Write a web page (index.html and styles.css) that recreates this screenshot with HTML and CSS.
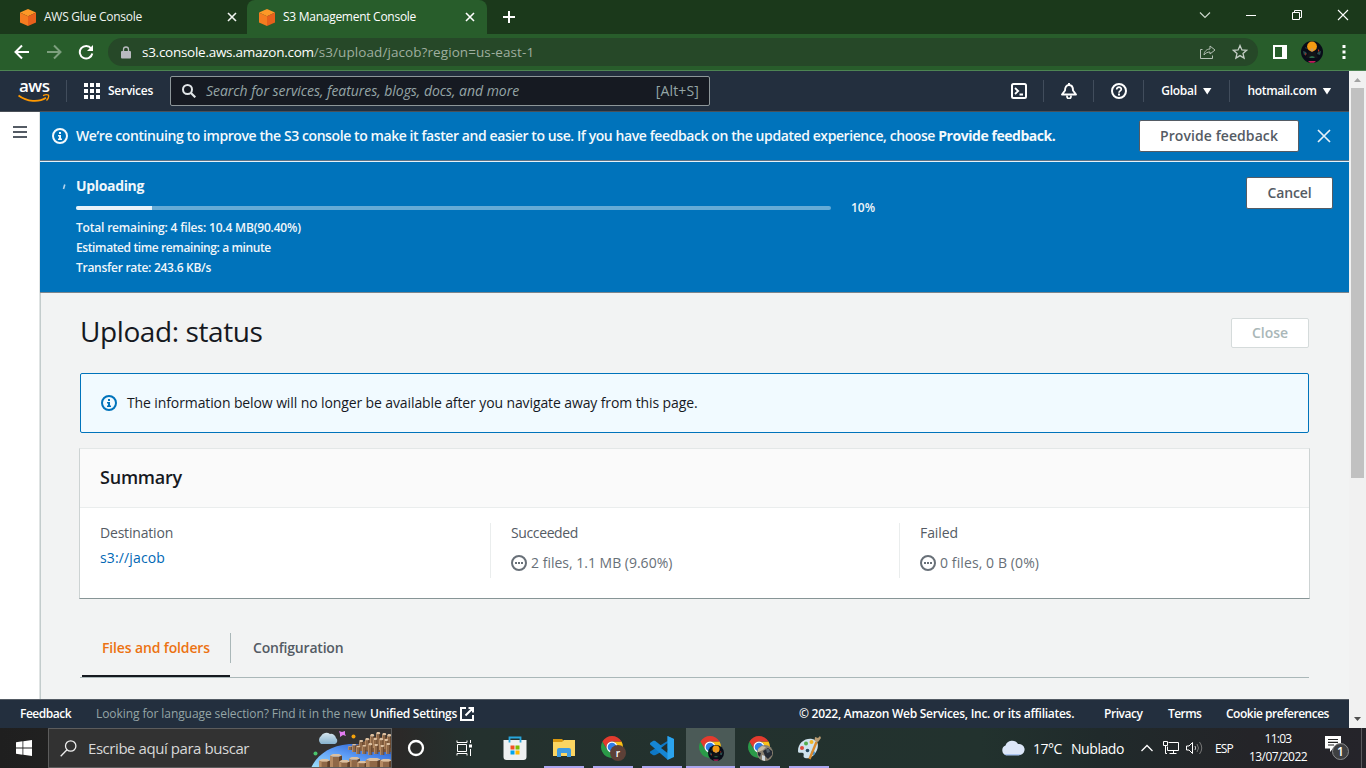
FILE: index.html
```html
<!DOCTYPE html>
<html lang="en">
<head>
<meta charset="utf-8">
<title>S3 Management Console</title>
<link rel="stylesheet" href="styles.css">
</head>
<body>
<svg class="defs" aria-hidden="true">
  <symbol id="cube" viewBox="0 0 16 17"><path fill="#fd9827" d="M8 0l8 3.600-8 3.600L0 3.600z"/><path fill="#f57c20" d="M0 3.600l8 3.600V17l-8-3.600z"/><path fill="#e8601c" d="M16 3.600L8 7.200V17l8-3.600z"/></symbol>
  <symbol id="x" viewBox="0 0 10 10"><path d="M1 1l8 8M9 1L1 9" fill="none" stroke="currentColor" stroke-width="1.600"/></symbol>
  <symbol id="info" viewBox="0 0 16 16"><circle cx="8" cy="8" r="7" fill="none" stroke="currentColor" stroke-width="2"/><path fill="currentColor" d="M7 4h2v2H7zM6 7h3v3.500h1V12H6v-1.500h1v-2H6z"/></symbol>
  <symbol id="pending" viewBox="0 0 16 16"><circle cx="8" cy="8" r="7" fill="none" stroke="currentColor" stroke-width="2"/><path fill="currentColor" d="M4 7h2v2H4zM7 7h2v2H7zM10 7h2v2h-2z"/></symbol>
  <symbol id="swirl" viewBox="0 0 24 24"><path d="M22.390 6A12 12 0 0 0 1.610 6L6.800 15A6 6 0 0 1 12 6z"/></symbol>
  <symbol id="chrome" viewBox="0 0 24 24"><use href="#swirl" width="24" height="24" fill="#fbc116" transform="rotate(120 12 12)"/><use href="#swirl" width="24" height="24" fill="#2a9a48" transform="rotate(240 12 12)"/><use href="#swirl" width="24" height="24" fill="#e33b2e"/><circle cx="12" cy="12" r="6" fill="#fff"/><circle cx="12" cy="12" r="4.700" fill="#2f7de9"/></symbol>
  <symbol id="face" viewBox="0 0 22 22"><circle cx="11" cy="11" r="11" fill="#080c18"/><circle cx="11" cy="5.500" r="4.900" fill="#f39a12"/><path fill="#2b4d4d" d="M2 10l3 1 1 2-3 1zM20 10l-3 1-1 2 3 1zM4 6l2 1-1 1z"/><path fill="#c99a62" d="M9.800 7.500h2.400V10.500H9.800z"/><path fill="#121418" d="M7.500 11h7l2.500 6H5z"/><path fill="#b3321c" d="M4 12l1.500 1-1 2zM17 8l1.500 1.500L17 11z"/><path fill="#2b6b4a" d="M8 16l3-1 3 1-1 1H9z"/><path fill="#c01e5c" d="M7 20h8l-2 1.800H9z"/></symbol>
  <symbol id="pillar" viewBox="0 0 12 20" preserveAspectRatio="none"><path fill="#dcc0a0" d="M3 0h6l3 2-3 2H3L0 2z"/><path fill="#b58a62" d="M0 2l3 2v16H0z"/><path fill="#8f6847" d="M3 4h6v16H3z"/><path fill="#5f4029" d="M12 2L9 4v16h3z"/></symbol>
</svg>

<header class="tabs">
  <div class="tab"><svg class="cube"><use href="#cube"/></svg><span class="tab-name">AWS Glue Console</span><svg class="tab-x"><use href="#x"/></svg></div>
  <div class="tab active"><svg class="cube"><use href="#cube"/></svg><span class="tab-name second">S3 Management Console</span><svg class="tab-x"><use href="#x"/></svg></div>
  <svg class="plus" viewBox="0 0 12 12"><path d="M6 0v12M0 6h12" stroke="#fff" stroke-width="2"/></svg>
  <div class="window-buttons">
    <svg viewBox="0 0 12 12"><path d="M1 3.500l5 5 5-5" fill="none" stroke="#ccd6cc" stroke-width="1.200"/></svg>
    <svg viewBox="0 0 12 12"><path d="M1 6.500h10" stroke="#fff"/></svg>
    <svg viewBox="0 0 12 12"><path d="M1.500 3.500h7v7h-7zM3.500 3.500v-2h7v7h-2" fill="none" stroke="#fff"/></svg>
    <svg viewBox="0 0 12 12"><path d="M1 1l10 10M11 1L1 11" stroke="#fff" stroke-width="1.100"/></svg>
  </div>
</header>

<div class="toolbar">
  <svg class="nav-icon" viewBox="0 0 16 16"><path d="M15 8H2M8 1.500L1.500 8 8 14.500" fill="none" stroke="#fff" stroke-width="2"/></svg>
  <svg class="nav-icon" viewBox="0 0 16 16"><path d="M1 8h13M8 1.500L14.500 8 8 14.500" fill="none" stroke="#7d9f7e" stroke-width="2"/></svg>
  <svg class="nav-icon" viewBox="0 0 16 16"><path d="M13.200 4.500A6.300 6.300 0 1 0 14.300 9.500" fill="none" stroke="#fff" stroke-width="2"/><path d="M15 1v6H9z" fill="#fff"/></svg>
  <div class="omnibox">
    <svg class="lock" viewBox="0 0 10 13"><path fill="#b9bac0" d="M1 5h8a1 1 0 0 1 1 1v5.500a1 1 0 0 1-1 1H1a1 1 0 0 1-1-1V6a1 1 0 0 1 1-1z"/><path d="M2.500 6V3.500a2.500 2.500 0 0 1 5 0V6" fill="none" stroke="#b9bac0" stroke-width="1.300"/></svg>
    <span class="domain">s3.console.aws.amazon.com</span><span class="path">/s3/upload/jacob?region=us-east-1</span>
    <svg class="share" viewBox="0 0 16 14"><path d="M2.500 4.500h-2v9h12v-3" fill="none" stroke="#b4c0b5"/><path d="M10 1l5 4-5 4V7C7.500 7 5.500 8 4 10c.3-3.500 2.500-6 6-6z" fill="none" stroke="#b4c0b5"/></svg>
    <svg class="star" viewBox="0 0 16 16"><path d="M8 1.500l1.900 4.400 4.700.4-3.600 3.100 1.100 4.700L8 11.600l-4.100 2.500L5 9.400 1.400 6.300l4.700-.4z" fill="none" stroke="#c4cdc5" stroke-width="1.300"/></svg>
  </div>
  <svg class="panel" viewBox="0 0 14 14"><path fill="#fff" fill-rule="evenodd" d="M0 0h14v14H0zM2 2v10h7V2z"/></svg>
  <svg class="avatar"><use href="#face"/></svg>
  <svg class="dots" viewBox="0 0 4 14"><path fill="#fff" d="M.5 0h3v3h-3zM.5 5.500h3v3h-3zM.5 11h3v3h-3z"/></svg>
</div>

<div class="page">
  <div class="view">
    <nav class="aws-nav">
      <div class="aws-logo"><span>aws</span><svg viewBox="0 0 32 9"><path d="M.5 1.500C9 8 21 8.500 28 3.800" fill="none" stroke="#f90" stroke-width="1.800"/><path d="M25 1.600c2.500-1 4.500-1 5.500-.5.500 1.500-.3 3.700-2 5.400" fill="none" stroke="#f90" stroke-width="1.300"/></svg></div>
      <i class="sep first"></i>
      <svg class="grid" viewBox="0 0 16 16"><path fill="#fff" d="M0 0h4v4H0zM6 0h4v4H6zM12 0h4v4h-4zM0 6h4v4H0zM6 6h4v4H6zM12 6h4v4h-4zM0 12h4v4H0zM6 12h4v4H6zM12 12h4v4h-4z"/></svg>
      <span class="services">Services</span>
      <div class="search"><svg viewBox="0 0 14 14"><circle cx="5.500" cy="5.500" r="4.500" fill="none" stroke="#e2e6e8" stroke-width="2"/><path d="M9 9l4.300 4.300" stroke="#e2e6e8" stroke-width="2.200"/></svg><span class="placeholder">Search for services, features, blogs, docs, and more</span><span class="key">[Alt+S]</span></div>
      <div class="nav-tools">
        <div class="tool"><svg viewBox="0 0 16 16"><rect x="1" y="1" width="14" height="14" rx="1.500" fill="none" stroke="#fff" stroke-width="2"/><path d="M4 5l3.200 3L4 11M8.500 11.500H12" fill="none" stroke="#fff" stroke-width="1.800"/></svg></div>
        <div class="tool"><svg viewBox="0 0 16 16"><path d="M8 0v2M1 11.500h14l-3-4C12 4 10.500 2 8 2S4 4 4 7.500z" fill="none" stroke="#fff" stroke-width="1.900" stroke-linejoin="round"/><path d="M6 12.500v1a2 2 0 0 0 4 0v-1" fill="none" stroke="#fff" stroke-width="1.700"/></svg></div>
        <div class="tool"><svg viewBox="0 0 16 16"><circle cx="8" cy="8" r="7" fill="none" stroke="#fff" stroke-width="2"/><path d="M5.700 6.400C5.700 3.400 10.400 3.600 10.300 6.300 10.200 8 8 7.800 8 9.800" fill="none" stroke="#fff" stroke-width="1.700"/><path fill="#fff" d="M7 10.600h2v1.900H7z"/></svg></div>
        <div class="tool global"><span>Global</span><b class="caret"></b></div>
        <div class="tool account"><span>hotmail.com</span><b class="caret"></b></div>
      </div>
    </nav>
    <div class="body">
      <aside><svg viewBox="0 0 14 12"><path fill="#545b64" d="M0 0h14v2H0zM0 5h14v2H0zM0 10h14v2H0z"/></svg></aside>
      <main>
        <section class="flash">
          <svg class="info"><use href="#info"/></svg>
          <p class="flash-text">We’re continuing to improve the S3 console to make it faster and easier to use. If you have feedback on the updated experience, choose <b>Provide feedback.</b></p>
          <button class="btn feedback-btn">Provide feedback</button>
          <svg class="dismiss" viewBox="0 0 14 14"><path d="M1 1l12 12M13 1L1 13" stroke="#e4f0f8" stroke-width="1.700"/></svg>
        </section>
        <section class="upload">
          <svg class="spinner" viewBox="0 0 4 6"><path d="M2.800.5L1.500 5" stroke="#b3d4ec" stroke-width="1.600"/></svg>
          <div class="upload-info">
            <h3>Uploading</h3>
            <div class="progress"><div class="track"><div class="fill" style="width:10%"></div></div><span>10%</span></div>
            <p class="l1">Total remaining: 4 files: 10.4 MB(90.40%)</p>
            <p class="l2">Estimated time remaining: a minute</p>
            <p class="l3">Transfer rate: 243.6 KB/s</p>
          </div>
          <button class="btn cancel">Cancel</button>
        </section>
        <div class="content">
          <div class="title"><h1>Upload: status</h1><button class="btn close">Close</button></div>
          <div class="notice"><svg class="info"><use href="#info"/></svg><span>The information below will no longer be available after you navigate away from this page.</span></div>
          <section class="summary">
            <h2>Summary</h2>
            <div class="cols">
              <div class="col"><label class="dest">Destination</label><a>s3://jacob</a></div>
              <div class="col"><label class="succ">Succeeded</label><div class="status"><svg><use href="#pending"/></svg><span>2 files, 1.1 MB (9.60%)</span></div></div>
              <div class="col"><label>Failed</label><div class="status"><svg><use href="#pending"/></svg><span class="none">0 files, 0 B (0%)</span></div></div>
            </div>
          </section>
          <div class="page-tabs"><div class="page-tab on">Files and folders</div><i></i><div class="page-tab">Configuration</div></div>
        </div>
      </main>
    </div>
    <footer>
      <span class="f-feedback">Feedback</span>
      <span class="f-lang">Looking for language selection? Find it in the new</span>
      <span class="f-unified">Unified Settings</span>
      <svg viewBox="0 0 14 14"><path d="M6 1H1v12h12V8M8.500 1H13v4.500M13 1L5.500 8.500" fill="none" stroke="#fff" stroke-width="2"/></svg>
      <span class="f-copy">© 2022, Amazon Web Services, Inc. or its affiliates.</span>
      <span class="f-privacy">Privacy</span>
      <span class="f-terms">Terms</span>
      <span class="f-cookie">Cookie preferences</span>
    </footer>
  </div>
  <div class="scrollbar">
    <svg viewBox="0 0 17 17"><path fill="#a3a3a3" d="M5 11l3.500-4 3.500 4z"/></svg>
    <div class="thumb"></div>
    <svg class="down" viewBox="0 0 17 17"><path fill="#505050" d="M5 6l3.500 4L12 6z"/></svg>
  </div>
</div>

<div class="taskbar">
  <div class="start"><svg viewBox="0 0 16 16"><path fill="#fff" d="M0 2.300l6.500-1v6.300H0zM7.300 1.200L16 0v7.600H7.300zM0 8.400h6.500v6.300L0 13.800zM7.300 8.400H16V16l-8.700-1.200z"/></svg></div>
  <div class="task-search">
    <svg class="mag" viewBox="0 0 17 17"><circle cx="10.700" cy="6" r="5.200" fill="none" stroke="#eee" stroke-width="1.300"/><path d="M7 9.800L.7 16.200" stroke="#eee" stroke-width="1.300"/></svg>
    <span>Escribe aquí para buscar</span>
    <svg class="art" viewBox="0 0 82 38">
      <defs><linearGradient id="sea" x1="0" y1="1" x2="1" y2="0"><stop offset="0" stop-color="#9fe3fb"/><stop offset=".5" stop-color="#5b9af5"/><stop offset="1" stop-color="#1c4fc0"/></linearGradient><linearGradient id="fog" x2="0" y2="1"><stop offset="0" stop-color="#d6e6ee"/><stop offset="1" stop-color="#86b2ce"/></linearGradient></defs>
      <path fill="url(#sea)" d="M2 39C8 26 20 17 40 15h42v24z"/>
      <path fill="url(#fog)" d="M12 15a5 5 0 0 1 0-8 6 6 0 0 1 9-2 5 5 0 0 1 6 4 3.500 3.500 0 0 1-1 6z"/>
      <path fill="#e27cf2" d="M30 2l3 1 3-1v3l1 2-3-1-3 2v-3z"/><circle cx="44.500" cy="7.500" r="2" fill="#f6a30b"/><circle cx="6.500" cy="24.500" r="2" fill="#49c46c"/>
      <path fill="#805b3f" d="M42 19l12-6 10-5 18 1v14H60z"/>
      <use href="#pillar" x="67" y="3" width="4.500" height="12"/><use href="#pillar" x="61" y="5" width="4.500" height="14"/><use href="#pillar" x="73" y="4" width="4.500" height="12"/><use href="#pillar" x="78" y="5" width="4.500" height="14"/><use href="#pillar" x="56" y="9" width="4.500" height="12"/><use href="#pillar" x="50" y="11" width="4.500" height="11"/>
      <use href="#pillar" x="64" y="9" width="4.500" height="10"/><use href="#pillar" x="70" y="9" width="4.500" height="12"/><use href="#pillar" x="75" y="10" width="4.500" height="10"/>
      <use href="#pillar" x="39" y="17" width="4.500" height="4"/><use href="#pillar" x="43" y="15" width="4.500" height="8"/><use href="#pillar" x="47" y="17" width="4.500" height="8"/><use href="#pillar" x="53" y="16" width="4.500" height="9"/><use href="#pillar" x="59" y="14" width="4.500" height="12"/><use href="#pillar" x="65" y="15" width="4.500" height="10"/><use href="#pillar" x="71" y="16" width="4.500" height="10"/><use href="#pillar" x="77" y="14" width="4.500" height="11"/>
      <path fill="#a17449" d="M10 32h72v7H10z"/>
      <use href="#pillar" x="21" y="25" width="12" height="14"/><use href="#pillar" x="10" y="30" width="11" height="14"/><use href="#pillar" x="40" y="28" width="11" height="14"/><use href="#pillar" x="30" y="31" width="11" height="14"/><use href="#pillar" x="48" y="32" width="10" height="12"/><use href="#pillar" x="57" y="29" width="15" height="15"/><use href="#pillar" x="71" y="30" width="12" height="14"/>
    </svg>
  </div>
  <div class="slot half"><svg class="i18" viewBox="0 0 18 18"><circle cx="9" cy="9" r="7" fill="none" stroke="#fff" stroke-width="2.300"/></svg></div>
  <div class="slot half"><svg class="i16" viewBox="0 0 16 16"><path d="M1 .5v2h10v-2M1.500 4.500h9v7h-9zM1 15.500v-2h10v2M14.500 0v3M14.500 9v7" fill="none" stroke="#fff"/><path fill="#fff" d="M13 4.500h3v3h-3z"/></svg></div>
  <div class="slot store"><svg class="i24" viewBox="0 0 24 24"><path fill="#eef0f1" d="M.5 4h23v17a3 3 0 0 1-3 3h-17a3 3 0 0 1-3-3z"/><path d="M6.500 6.500V1.500h11v5" fill="none" stroke="#27a5dc" stroke-width="1.800"/><path fill="#f25022" d="M7.500 9.500h4v4h-4z"/><path fill="#7fba00" d="M12.500 9.500h4v4h-4z"/><path fill="#00a4ef" d="M7.500 14.500h4v4h-4z"/><path fill="#ffb900" d="M12.500 14.500h4v4h-4z"/></svg></div>
  <div class="slot open"><svg class="i22" viewBox="0 0 22 20"><path fill="#d9980f" d="M0 1h9l2 2v4H0z"/><path fill="#fbd561" d="M0 4h9l2-2h11v16H0z"/><path fill="#3f9be0" d="M4 19v-7a2 2 0 0 1 2-2h10a2 2 0 0 1 2 2v7h-4v-4H8v4z"/></svg></div>
  <div class="slot open"><svg class="i26" viewBox="0 0 26 26"><use href="#chrome" x="1" y="1" width="22" height="22"/><circle cx="18" cy="18" r="8" fill="#5d4037"/><text x="18" y="21.500" class="badge-letter">r</text></svg></div>
  <div class="slot open"><svg class="i24" viewBox="0 0 24 24"><path fill="#0e78c6" d="M17.500 0L24 3v6L5 19.200l-1.700.1L0 17l.1-1.500L17.500 5z"/><path fill="#1686d4" d="M0 7l3.300-2.300L5 4.800 18 15v9L.1 8.500z"/><path fill="#222f2d" d="M17.500 7v10L11 12z"/><path fill="#2ba4ee" d="M17.500 0L24 3v18l-6.500 3z"/></svg></div>
  <div class="slot open current"><svg class="i26" viewBox="0 0 26 26"><use href="#chrome" x="1" y="1" width="22" height="22"/><use href="#face" x="10" y="10" width="16" height="16"/></svg></div>
  <div class="slot open"><svg class="i26" viewBox="0 0 26 26"><use href="#chrome" x="1" y="1" width="22" height="22"/><circle cx="18" cy="18" r="8" fill="#8a8171"/><path fill="#c6baa3" d="M11 14l4-3 4 1-3 3-5 2z"/><path fill="#242b35" d="M16 16l5-3 4 3 0 4-4 4-3-3zM11 17l3 1-1 4-2-2z"/><path fill="#54616b" d="M19 14l3 0 1 3-3 1z"/><path fill="#ced7dd" d="M15 20l3 1 0 5-3-1z"/></svg></div>
  <div class="slot open"><svg class="i26" viewBox="0 0 26 26"><path fill="#cfe3ee" d="M2 16C2 8 9 3 16 4c6 1 7 6 5 11-3 7-8 9-12 8-3-1 0-4-2-5-2-1-5 1-5-2z"/><circle cx="6" cy="13" r="2" fill="#dd4a3c"/><circle cx="10" cy="8.500" r="2" fill="#53ad4d"/><circle cx="15.500" cy="7" r="2" fill="#f0b428"/><circle cx="11.500" cy="15.500" r="1.800" fill="#25475c"/><circle cx="17" cy="18" r="2" fill="#3a8ed1"/><path d="M13.500 24L20.500 7" stroke="#d98a2e" stroke-width="2.400"/><path fill="#b99b72" d="M18.500 6L19 2l3 1 2-2 1 2-3 4z"/></svg></div>
  <div class="tray">
    <svg class="cloud" viewBox="0 0 24 16"><path fill="#dce6f8" d="M5 15a5 5 0 0 1-.5-9.500A7 7 0 0 1 17 4a5.500 5.500 0 0 1 2 11z"/><path fill="#aac4f0" d="M3 14h17l-2 1.500H5z"/></svg>
    <span class="temp">17°C</span><span class="sky">Nublado</span>
    <svg class="up" viewBox="0 0 12 8"><path d="M.5 7L6 1.500 11.500 7" fill="none" stroke="#fff" stroke-width="1.300"/></svg>
    <svg class="net" viewBox="0 0 16 14"><path d="M5.500 1.500h10v8h-11v-4M.5.500h4v4h-4zM2.500 4.500v8H4M10.500 9.500v3M6.500 12.500h7" fill="none" stroke="#fff"/></svg>
    <svg class="vol" viewBox="0 0 17 14"><path d="M.5 5h2.500l3.500-3.500v11L3 9H.5z" fill="none" stroke="#fff"/><path d="M9 5q1.300 2 0 4" fill="none" stroke="#ccc"/><path d="M11 3q3 4 0 8M13.500 1q4.500 6 0 12" fill="none" stroke="#777"/></svg>
    <span class="lang">ESP</span>
    <div class="clock"><span class="time">11:03</span><span class="date">13/07/2022</span></div>
    <svg class="note" viewBox="0 0 24 24"><path fill="#fff" d="M0 0h16v12.500H8L5 16v-3.500H0z"/><path d="M3 3.500h10M3 6.300h10M3 9h6" stroke="#222" stroke-width="1.200"/><circle cx="15.500" cy="15.500" r="8" fill="#3f4042" stroke="#8a8b8d"/><text x="15.500" y="20" class="note-count">1</text></svg>
    <i class="peek"></i>
  </div>
</div>
</body>
</html>
```
FILE: styles.css
```css
* { box-sizing: border-box; }
body { margin: 0; width: 1366px; height: 768px; overflow: hidden; display: flex; flex-direction: column; font-family: "Open Sans", "Noto Sans", sans-serif; font-size: 14px; color: #16191f; }
p, h1, h2, h3 { margin: 0; }
svg { display: block; flex: none; }
span, p, label, a, h1, h2, h3, .btn, .page-tab { white-space: nowrap; }
.defs { width: 0; height: 0; position: absolute; }

/* Browser tab strip */
.tabs { height: 34px; flex: none; display: flex; align-items: center; background: #1b391b; }
.tab { height: 34px; width: 240px; display: flex; align-items: center; color: #f1f4f1; padding-left: 12px; }
.tab:first-child { width: 247px; padding-left: 20px; }
.tab.active { background: #285d2b; border-radius: 8px 8px 0 0; color: #fff; }
.cube { width: 16px; height: 17px; margin-right: 8px; }
.tab-name { font-size: 12px; letter-spacing: -.26px; flex: 1; padding-bottom: 1px; }
.tab-name.second { letter-spacing: -.27px; }
.tab-x { width: 10px; height: 10px; margin-right: 12px; }
.tab:first-child .tab-x { margin-right: 10px; }
.plus { width: 12px; height: 12px; margin-left: 16px; }
.window-buttons { margin-left: auto; display: flex; gap: 34px; padding-right: 17px; padding-bottom: 5px; }
.window-buttons svg { width: 12px; height: 12px; }

/* Browser toolbar */
.toolbar { height: 37px; flex: none; display: flex; align-items: center; background: #285d2b; border-bottom: 1px solid #4d8453; padding-left: 14px; }
.nav-icon { width: 16px; height: 16px; margin-right: 16px; }
.nav-icon:nth-child(3) { margin-right: 14px; }
.omnibox { width: 1150px; height: 28px; border-radius: 14px; background: #264828; display: flex; align-items: center; padding: 0 10px 0 13px; font-size: 13.5px; }
.lock { width: 10px; height: 13px; margin-right: 11px; }
.domain { color: #fff; letter-spacing: -.27px; }
.path { color: #9fae9f; letter-spacing: .08px; }
.share { width: 16px; height: 14px; margin-left: auto; margin-right: 16px; }
.star { width: 16px; height: 16px; }
.panel { width: 14px; height: 14px; margin-left: 15px; }
.avatar { width: 22px; height: 22px; margin-left: 14px; }
.dots { width: 4px; height: 14px; margin-left: 19px; }

.page { height: 657px; flex: none; display: flex; }
.view { width: 1349px; display: flex; flex-direction: column; }

/* Console navigation */
.aws-nav { height: 41px; flex: none; background: #232f3e; border-bottom: 1px solid #4a5058; display: flex; align-items: center; color: #fff; font-size: 12px; font-weight: 600; }
.aws-nav > .services, .tool span { padding-bottom: 1px; }
.aws-logo { width: 32px; margin-left: 18px; padding-bottom: 3px; }
.aws-logo span { display: block; font-size: 17px; line-height: 17px; letter-spacing: -.5px; padding-left: 1px; font-weight: 600; }
.aws-logo svg { width: 32px; height: 9px; }
.sep { width: 1px; height: 22px; background: #414d5c; margin-left: 16px; }
.grid { width: 16px; height: 16px; margin-left: 17px; }
.services { margin-left: 8px; width: 45px; letter-spacing: -.27px; }
.search { margin-left: 17px; width: 540px; height: 30px; border: 1px solid #8d9699; border-radius: 2px; background: #161a22; display: flex; align-items: center; padding: 0 10px 0 11px; font-size: 14px; font-weight: 400; color: #95a5a6; }
.search span { padding-bottom: 1px; }
.search svg { width: 14px; height: 14px; margin-right: 10px; }
.placeholder { font-style: italic; letter-spacing: -.04px; }
.key { margin-left: auto; letter-spacing: .15px; }
.nav-tools { margin-left: auto; display: flex; align-items: center; }
.tool { width: 50px; height: 22px; display: flex; align-items: center; justify-content: center; border-right: 1px solid #414d5c; }
.tool svg { width: 16px; height: 16px; }
.tool.global { width: 86px; letter-spacing: -.28px; }
.tool.account { width: 119px; border: 0; letter-spacing: -.35px; }
.caret { width: 9px; height: 7px; margin-left: 6px; background: #fff; clip-path: polygon(0 0, 100% 0, 50% 100%); }

.body { flex: 1; min-height: 0; display: flex; }
aside { width: 40px; background: #fff; padding: 14px 0 0 13px; box-shadow: inset -1px 0 #e0e4e4; }
aside svg { width: 14px; height: 12px; }
main { width: 1309px; background: #f2f3f3; display: flex; flex-direction: column; }

/* Flash messages */
.flash { height: 49px; flex: none; background: #0073bb; border-bottom: 1px solid #5f7386; color: #f4f9fc; display: flex; align-items: center; padding-left: 12px; }
.info { width: 16px; height: 16px; margin-right: 8px; }
.flash-text { flex: 1; font-weight: 600; letter-spacing: -.415px; padding-bottom: 2px; }
.flash-text b { font-weight: 700; letter-spacing: -.45px; }
.btn { height: 32px; border: 1px solid #545b64; border-radius: 2px; background: #fff; color: #545b64; font: 600 14px "Open Sans", "Noto Sans", sans-serif; padding: 0 0 2px; }
.feedback-btn { width: 160px; letter-spacing: .08px; }
.dismiss { width: 14px; height: 14px; margin: 0 18px; }
.upload { height: 132px; flex: none; background: #0073bb; color: #f0f6fa; border-top: 1px solid #e6f1f8; border-bottom: 1px solid #7b858c; display: flex; padding: 15px 16px 0 22px; }
.spinner { width: 4px; height: 6px; margin: 7px 10px 0 0; }
.upload-info { flex: 1; font-size: 12px; font-weight: 600; line-height: 20px; }
.upload-info h3 { font-size: 14px; font-weight: 700; line-height: 17px; letter-spacing: -.34px; }
.progress { display: flex; align-items: center; height: 20px; margin-top: 4px; }
.track { width: 755px; height: 4px; background: #66abd6; border-radius: 2px; margin-right: 20px; overflow: hidden; }
.fill { height: 4px; background: #e8f2f9; }
.l1 { letter-spacing: -.19px; }
.l2 { letter-spacing: -.39px; }
.l3 { letter-spacing: -.28px; }
.cancel { width: 87px; letter-spacing: -.1px; }

/* Page content */
.content { flex: 1; padding: 25px 40px 0 39px; border-left: 1px solid #c3cccc; }
.title { display: flex; justify-content: space-between; height: 55px; }
h1 { font-size: 28px; line-height: 26px; font-weight: 400; letter-spacing: -.4px; }
.close { width: 78px; height: 30px; border-color: #d5dbdb; color: #aab7b8; }
.notice { height: 60px; border: 1px solid #0073bb; border-radius: 2px; background: #f1faff; display: flex; align-items: center; padding-left: 20px; letter-spacing: -.11px; }
.notice span { padding-bottom: 2px; }
.notice .info { color: #0073bb; margin-right: 10px; }
.summary { height: 151px; margin: 15px -1px 0; background: #fff; border: 1px solid #e3e7e7; border-left-color: #cdd3d3; border-right-color: #cdd3d3; border-bottom-color: #879596; }
h2 { height: 59px; padding: 0 20px; background: #fafafa; border-bottom: 1px solid #eaeded; font-size: 18px; line-height: 57px; font-weight: 600; letter-spacing: -.22px; }
.cols { display: flex; padding-top: 15px; }
.col { width: 409px; height: 55px; padding-left: 20px; border-left: 1px solid #eaeded; color: #545b64; }
.col:first-child { width: 410px; border: 0; }
label { display: block; line-height: 20px; height: 22px; letter-spacing: -.08px; }
.dest { letter-spacing: -.19px; }
.succ { letter-spacing: -.38px; }
a { display: block; color: #0067b5; line-height: 20px; margin-top: 3px; letter-spacing: .14px; }
.status { display: flex; align-items: center; height: 22px; margin-top: 7px; color: #687078; }
.status svg { width: 16px; height: 16px; margin-right: 4px; }
.status span { padding-bottom: 2px; }
.none { letter-spacing: .1px; }
.page-tabs { display: flex; height: 79px; border-bottom: 1px solid #aab7b8; align-items: flex-end; padding-left: 2px; font-weight: 600; color: #545b64; }
.page-tab { height: 45px; line-height: 31px; padding: 0 20px; letter-spacing: -.2px; }
.page-tab.on { width: 148px; color: #ec7211; letter-spacing: -.14px; border-bottom: 2px solid #16191f; }
.page-tabs i { width: 1px; height: 30px; margin-bottom: 14px; background: #aab7b8; }
.page-tab:last-child { padding-left: 22px; }

footer { height: 29px; flex: none; background: #232f3e; border-top: 1px solid #545b64; display: flex; align-items: center; color: #fff; font-size: 12px; font-weight: 600; padding: 0 20px; }
footer span { padding-bottom: 1px; }
footer svg { width: 14px; height: 14px; margin-left: 3px; }
.f-feedback { width: 76px; letter-spacing: -.49px; }
.f-lang { width: 274px; color: #95a5a6; font-weight: 400; letter-spacing: -.08px; }
.f-unified { width: 87px; letter-spacing: -.28px; }
.f-copy { margin-left: auto; width: 305px; letter-spacing: -.27px; }
.f-privacy { width: 64px; letter-spacing: -.45px; }
.f-terms { width: 58px; letter-spacing: -.58px; }
.f-cookie { width: 103px; letter-spacing: -.49px; }

.scrollbar { width: 17px; background: #f1f1f1; display: flex; flex-direction: column; align-items: center; }
.scrollbar svg { width: 17px; height: 17px; }
.thumb { width: 13px; height: 390px; background: #c1c1c1; }
.scrollbar .down { margin-top: auto; }

/* Desktop taskbar */
.taskbar { height: 40px; flex: none; display: flex; color: #fff; background: linear-gradient(90deg, #1f1f1f 0, #2b2928 400px, #24312e 470px, #22322e 980px, #202a2b 1100px, #242428 1250px, #25242a 100%); }
.start { width: 48px; display: grid; place-items: center; }
.start svg { width: 16px; height: 16px; }
.task-search { width: 344px; border: 1px solid #5c5c5c; background: #323232; display: flex; align-items: center; font-size: 15px; color: #d8d8d8; overflow: hidden; }
.mag { width: 17px; height: 17px; margin: 0 11px; }
.task-search span { letter-spacing: -.44px; }
.art { width: 82px; height: 38px; margin-left: auto; }
.slot { width: 49px; height: 40px; display: flex; justify-content: center; align-items: center; border-bottom: 2px solid transparent; padding-top: 2px; }
.slot.half { width: 48px; }
.store { margin-left: 2px; }
.open { border: 0; padding: 0; background: linear-gradient(#aba6ef, #aba6ef) center bottom / 40px 2px no-repeat; }
.current { background-color: #4b5a57; background-size: 49px 2px; }
.i16 { width: 16px; height: 16px; }
.i18 { width: 18px; height: 18px; }
.i22 { width: 22px; height: 20px; }
.i24 { width: 24px; height: 24px; }
.i26 { width: 26px; height: 26px; }
.badge-letter { font: 600 10px "Open Sans", sans-serif; fill: #fff; text-anchor: middle; }
.tray { margin-left: auto; display: flex; align-items: center; }
.cloud { width: 24px; height: 16px; margin-right: 8px; }
.temp { width: 38px; letter-spacing: -.46px; }
.sky { width: 70px; letter-spacing: -.43px; }
.up { width: 12px; height: 8px; }
.net { width: 16px; height: 14px; margin-left: 10px; }
.vol { width: 17px; height: 14px; margin-left: 7px; }
.lang { font-size: 12px; letter-spacing: -.82px; margin-left: 12px; width: 20px; }
.clock { width: 58px; margin-left: 14px; display: flex; flex-direction: column; align-items: center; font-size: 12px; line-height: 18px; }
.time { letter-spacing: -.72px; }
.date { letter-spacing: -.57px; }
.note { width: 24px; height: 24px; margin-left: 18px; }
.note-count { font: 600 12px "Open Sans", sans-serif; fill: #fff; text-anchor: middle; }
.peek { width: 1px; height: 40px; background: #5a5a5e; margin: 0 4px 0 12px; }
```
